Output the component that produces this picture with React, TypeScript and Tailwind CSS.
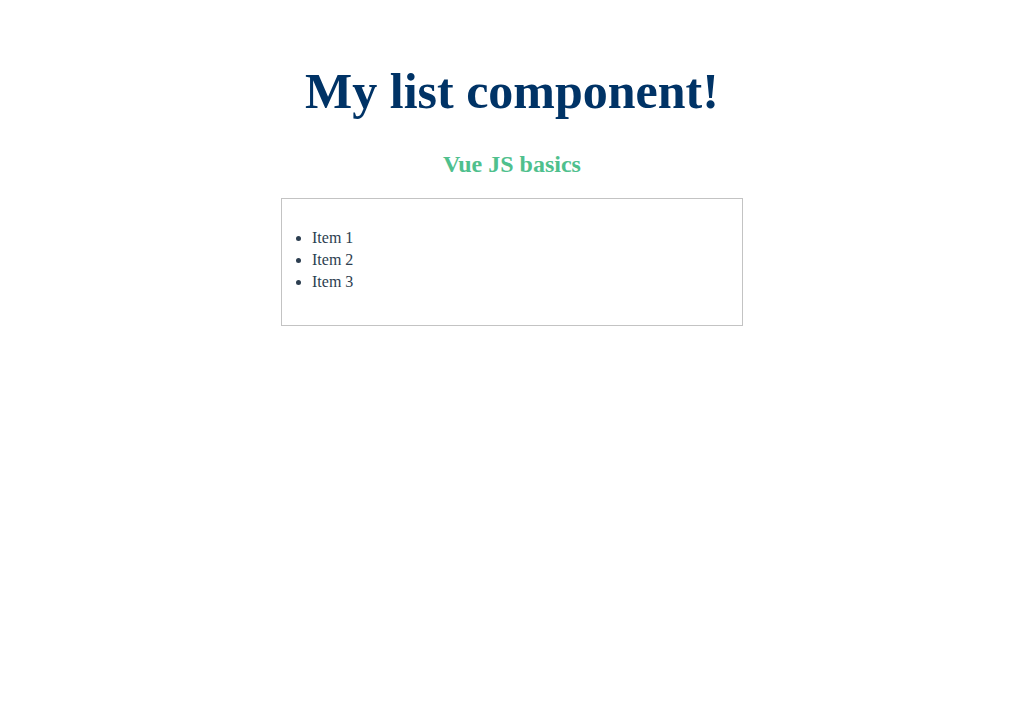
export default function App() {
  const items = ["Item 1", "Item 2", "Item 3"];

  return (
    <div className="min-h-screen bg-white pt-[64px] text-center font-['Liberation_Serif',serif]">
      <h1 className="text-[50px] font-bold leading-[55px] text-[#003366]">My list component!</h1>
      <h2 className="mt-[32px] text-[24px] font-bold leading-[27px] text-[#4fc08d]">Vue JS basics</h2>
      <div className="mx-auto mt-[20px] w-[462px] border border-[#c3c3c3] px-[10px] pt-[12px] pb-[16px] text-left">
        <ul className="my-4 list-disc pl-5 text-[16px] leading-[22px] text-[#2c3e50]">
          {items.map((item) => (
            <li key={item}>{item}</li>
          ))}
        </ul>
      </div>
    </div>
  );
}
